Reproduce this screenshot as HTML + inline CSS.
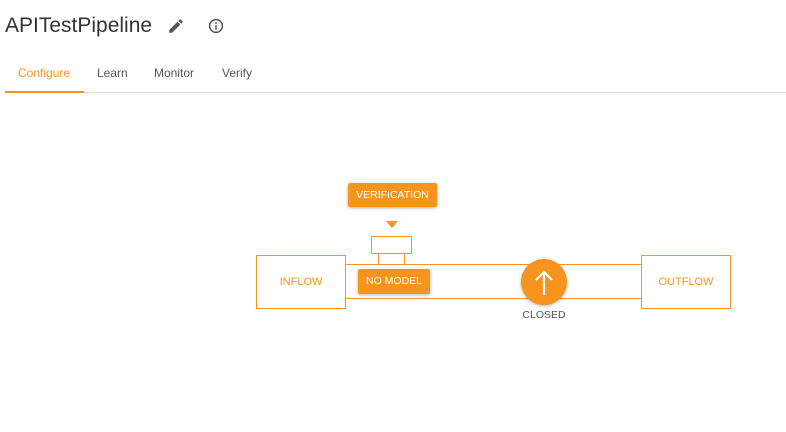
<!DOCTYPE html>
<html><head><style>
body{margin:0;width:786px;height:432px;background:#fff;font-family:"Liberation Sans",sans-serif;position:relative;overflow:hidden}
.a{position:absolute}
.btn{position:absolute;background:#f7941d;color:#fff;font-size:10.5px;text-align:center;border-radius:2px;box-shadow:0 1px 3px rgba(0,0,0,.3)}
.box{position:absolute;border:1px solid #f7941d;box-sizing:border-box;color:#f7941d;font-size:11px;display:flex;align-items:center;justify-content:center}
.ln{position:absolute;background:#f7941d}
</style></head><body>
<div class="a" style="left:5px;top:14px;font-size:21px;color:#333">APITestPipeline</div>
<svg class="a" style="left:167px;top:17px" width="18" height="18" viewBox="0 0 24 24"><path fill="#555" d="M3 17.25V21h3.75L17.81 9.94l-3.75-3.75L3 17.25zM20.71 7.04a1 1 0 000-1.41l-2.34-2.34a1 1 0 00-1.41 0l-1.83 1.83 3.75 3.75 1.83-1.83z"/></svg>
<svg class="a" style="left:207px;top:17px" width="18" height="18" viewBox="0 0 24 24"><circle cx="12" cy="12" r="8.5" fill="none" stroke="#555" stroke-width="2"/><rect x="11" y="11" width="2" height="6" fill="#555"/><rect x="11" y="7" width="2" height="2" fill="#555"/></svg>
<div class="a" style="left:18px;top:66px;font-size:12px;color:#f7941d">Configure</div>
<div class="a" style="left:97px;top:66px;font-size:12px;color:#555">Learn</div>
<div class="a" style="left:154px;top:66px;font-size:12px;color:#555">Monitor</div>
<div class="a" style="left:222px;top:66px;font-size:12px;color:#555">Verify</div>
<div class="a" style="left:5px;top:92px;width:781px;height:1px;background:#ddd"></div>
<div class="a" style="left:5px;top:91px;width:79px;height:2px;background:#f7941d"></div>

<div class="btn" style="left:348px;top:183px;width:89px;height:24px;line-height:24px">VERIFICATION</div>
<div class="a" style="left:386px;top:221px;width:0;height:0;border-left:6px solid transparent;border-right:6px solid transparent;border-top:7px solid #f7941d"></div>
<div class="box" style="left:371px;top:236px;width:41px;height:18px"></div>
<div class="ln" style="left:378px;top:253px;width:1px;height:12px"></div>
<div class="ln" style="left:404px;top:253px;width:1px;height:12px"></div>
<div class="ln" style="left:346px;top:264px;width:295px;height:1px"></div>
<div class="ln" style="left:346px;top:298px;width:295px;height:1px"></div>
<div class="box" style="left:256px;top:255px;width:90px;height:54px">INFLOW</div>
<div class="box" style="left:641px;top:255px;width:90px;height:54px">OUTFLOW</div>
<div class="btn" style="left:358px;top:269px;width:72px;height:25px;line-height:25px">NO MODEL</div>
<div class="a" style="left:521px;top:259px;width:46px;height:46px;border-radius:50%;background:#f7941d;box-shadow:0 1px 3px rgba(0,0,0,.3)"></div>
<svg class="a" style="left:532px;top:269px" width="24" height="28" viewBox="0 0 24 28"><path d="M12 26V3M4 11l8-8 8 8" fill="none" stroke="#fff" stroke-width="2.2"/></svg>
<div class="a" style="left:504px;top:309px;width:80px;text-align:center;font-size:10.5px;color:#555">CLOSED</div>
</body></html>
